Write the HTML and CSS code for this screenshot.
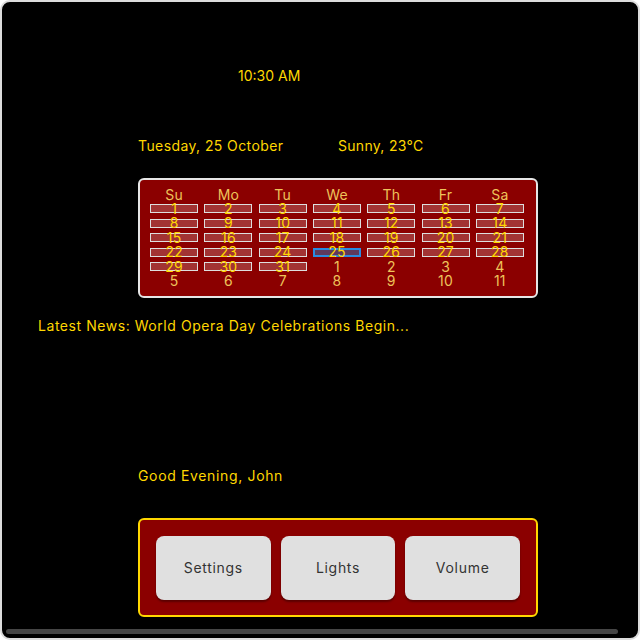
FILE: index.html
```html
<!DOCTYPE html>
<html>
<head>
<meta charset="utf-8">
<link rel="stylesheet" href="styles.css">
</head>
<body>
<div class="frame">
  <div class="time">10:30 AM</div>
  <div class="info">
    <span class="date">Tuesday, 25 October</span>
    <span class="weather">Sunny, 23°C</span>
  </div>
  <div class="calendar">
    <div class="cal-grid">
      <span class="hd">Su</span><span class="hd">Mo</span><span class="hd">Tu</span><span class="hd">We</span><span class="hd">Th</span><span class="hd">Fr</span><span class="hd">Sa</span>
      <span class="cell"><span class="day">1</span></span><span class="cell"><span class="day">2</span></span><span class="cell"><span class="day">3</span></span><span class="cell"><span class="day">4</span></span><span class="cell"><span class="day">5</span></span><span class="cell"><span class="day">6</span></span><span class="cell"><span class="day">7</span></span>
      <span class="cell"><span class="day">8</span></span><span class="cell"><span class="day">9</span></span><span class="cell"><span class="day">10</span></span><span class="cell"><span class="day">11</span></span><span class="cell"><span class="day">12</span></span><span class="cell"><span class="day">13</span></span><span class="cell"><span class="day">14</span></span>
      <span class="cell"><span class="day">15</span></span><span class="cell"><span class="day">16</span></span><span class="cell"><span class="day">17</span></span><span class="cell"><span class="day">18</span></span><span class="cell"><span class="day">19</span></span><span class="cell"><span class="day">20</span></span><span class="cell"><span class="day">21</span></span>
      <span class="cell"><span class="day">22</span></span><span class="cell"><span class="day">23</span></span><span class="cell"><span class="day">24</span></span><span class="cell"><span class="day today">25</span></span><span class="cell"><span class="day">26</span></span><span class="cell"><span class="day">27</span></span><span class="cell"><span class="day">28</span></span>
      <span class="cell"><span class="day">29</span></span><span class="cell"><span class="day">30</span></span><span class="cell"><span class="day">31</span></span><span class="cell other">1</span><span class="cell other">2</span><span class="cell other">3</span><span class="cell other">4</span>
      <span class="cell other">5</span><span class="cell other">6</span><span class="cell other">7</span><span class="cell other">8</span><span class="cell other">9</span><span class="cell other">10</span><span class="cell other">11</span>
    </div>
  </div>
  <div class="news">Latest News: World Opera Day Celebrations Begin...</div>
  <div class="greeting">Good Evening, John</div>
  <div class="panel">
    <button class="btn">Settings</button>
    <button class="btn">Lights</button>
    <button class="btn">Volume</button>
  </div>
  <div class="scrollbar"></div>
</div>
</body>
</html>
```

FILE: styles.css
```css
* { box-sizing: border-box; }
html, body { margin: 0; padding: 0; background: #fff; }
body {
  font-family: Inter, "Noto Sans", sans-serif;
  font-size: 14px;
  letter-spacing: 0.55px;
  color: #ffd700;
}
.frame {
  width: 640px;
  height: 640px;
  background: #000;
  border: 2px solid #dcdcdc;
  border-radius: 10px;
  overflow: hidden;
  display: flex;
  flex-direction: column;
  align-items: flex-start;
}
.time {
  line-height: 18px;
  letter-spacing: 0;
  margin: 65px 0 0 236px;
}
.info {
  display: flex;
  line-height: 18px;
  margin: 52px 0 0 136px;
}
.date { width: 200px; letter-spacing: 0.4px; }
.weather { letter-spacing: 0.3px; }
.calendar {
  width: 400px;
  height: 120px;
  margin: 23px 0 0 136px;
  background: #8b0000;
  border: 2px solid #e6e6e6;
  border-radius: 6px;
  padding: 8px 9px 0 7px;
}
.cal-grid {
  display: grid;
  grid-template-columns: repeat(7, 1fr);
  grid-template-rows: 13.5px repeat(6, 14.5px);
  letter-spacing: 0.2px;
}
.hd, .cell {
  display: flex;
  align-items: center;
  justify-content: center;
  color: #eec35a;
  line-height: 14px;
}
.day {
  width: 48px;
  height: 9px;
  display: flex;
  align-items: center;
  justify-content: center;
  background: #a23333;
  border: 1px solid #dedede;
  color: #ffd700;
}
.day.today {
  background: #5e3a5c;
  border: 2px solid #2a8be0;
}
.news {
  line-height: 18px;
  margin: 19px 0 0 36px;
}
.greeting {
  line-height: 18px;
  letter-spacing: 0.65px;
  margin: 132px 0 0 136px;
}
.panel {
  width: 400px;
  height: 99px;
  margin: 33px 0 0 136px;
  background: #8b0000;
  border: 2px solid #ffd700;
  border-radius: 6px;
  padding: 16px 16px 0 16px;
  display: flex;
  gap: 10px;
}
.btn {
  flex: 1;
  height: 64px;
  border: none;
  border-radius: 8px;
  background: #e0e0e0;
  color: #333;
  font-family: inherit;
  font-size: 14px;
  letter-spacing: 0.7px;
  padding: 0 0 2px 0;
  box-shadow: 0 2px 2px rgba(0,0,0,0.35);
}
.scrollbar {
  width: 612px;
  height: 5px;
  margin: 12px 0 0 4px;
  background: #454545;
  border-radius: 3px;
}
```
